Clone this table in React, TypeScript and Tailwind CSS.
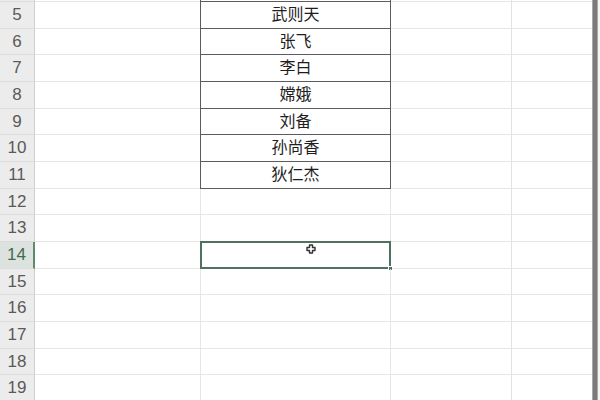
import React from 'react';

const rows = [
  { n: '', h: 'h-[2px]', name: '', table: 'top' },
  { n: '5', h: 'h-[27px]', name: '武则天', table: 'in' },
  { n: '6', h: 'h-[26px]', name: '张飞', table: 'in' },
  { n: '7', h: 'h-[27px]', name: '李白', table: 'in' },
  { n: '8', h: 'h-[27px]', name: '嫦娥', table: 'in' },
  { n: '9', h: 'h-[26px]', name: '刘备', table: 'in' },
  { n: '10', h: 'h-[27px]', name: '孙尚香', table: 'in' },
  { n: '11', h: 'h-[27px]', name: '狄仁杰', table: 'in' },
  { n: '12', h: 'h-[26px]', name: '', table: '' },
  { n: '13', h: 'h-[27px]', name: '', table: '' },
  { n: '14', h: 'h-[27px]', name: '', table: '' },
  { n: '15', h: 'h-[26px]', name: '', table: '' },
  { n: '16', h: 'h-[27px]', name: '', table: '' },
  { n: '17', h: 'h-[27px]', name: '', table: '' },
  { n: '18', h: 'h-[26px]', name: '', table: '' },
  { n: '19', h: 'h-[27px]', name: '', table: '' },
];

const FONT = "font-['Liberation_Sans','Noto_Sans_CJK_SC',sans-serif]";

// Excel-style fat cross pointer
const CursorIcon = () => (
  <svg width="10" height="10" viewBox="0 0 10 10">
    <path
      d="M3.5 1h3v2.5h2.5v3h-2.5v2.5h-3v-2.5h-2.5v-3h2.5z"
      fill="#ffffff"
      stroke="#333333"
      strokeWidth="1.4"
      strokeLinejoin="round"
    />
  </svg>
);

export default function App() {
  return (
    <div className={`flex w-[600px] h-[400px] overflow-hidden bg-white ${FONT}`}>
      {/* Grid */}
      <div className="flex flex-col w-[592px]">
        {rows.map((r) => {
          const selected = r.n === '14';
          const inTable = r.table !== '';
          return (
            <div key={r.n || 'top'} className={`flex shrink-0 ${r.h}`}>
              {/* Row header */}
              <div
                className={`w-[35px] shrink-0 flex items-center justify-center text-[17px] border-b border-b-[#dcdcdc] ${
                  selected
                    ? 'bg-[#dce3de] text-[#3f6a52] border-r-2 border-r-[#5f8a70]'
                    : 'bg-[#ececec] text-[#5a5a5a] border-r border-r-[#cfcfcf]'
                }`}
              >
                {r.n}
              </div>
              {/* Column B */}
              <div className="w-[165px] shrink-0 border-b border-b-[#e6e6e6]" />
              {/* Column C */}
              <div
                className={`relative w-[191px] shrink-0 flex items-center justify-center text-[16px] text-[#1e1e1e] border-l border-r border-b ${
                  inTable
                    ? 'border-l-[#5c5c5c] border-r-[#5c5c5c] border-b-[#5c5c5c]'
                    : 'border-l-[#e6e6e6] border-r-[#e6e6e6] border-b-[#e6e6e6]'
                }`}
              >
                {r.name}
                {selected && (
                  <>
                    <div className="absolute -top-[1px] -left-[1px] -right-[1px] -bottom-[1px] border-2 border-[#4f7160]" />
                    <div className="absolute -right-[3px] -bottom-[3px] w-[5px] h-[5px] bg-[#4f7160] border border-white" />
                    <div className="absolute left-[105px] top-[2px]">
                      <CursorIcon />
                    </div>
                  </>
                )}
              </div>
              {/* Column D */}
              <div className="w-[121px] shrink-0 border-r border-r-[#e2e2e2] border-b border-b-[#e6e6e6]" />
              {/* Column E */}
              <div className="flex-1 border-b border-b-[#e6e6e6]" />
            </div>
          );
        })}
      </div>
      {/* Scroll bar edge */}
      <div className="w-[6px] shrink-0 bg-[#7a7a7a] border-x border-x-[#a8a8a8]" />
      <div className="flex-1 bg-[#f4f4f4]" />
    </div>
  );
}
